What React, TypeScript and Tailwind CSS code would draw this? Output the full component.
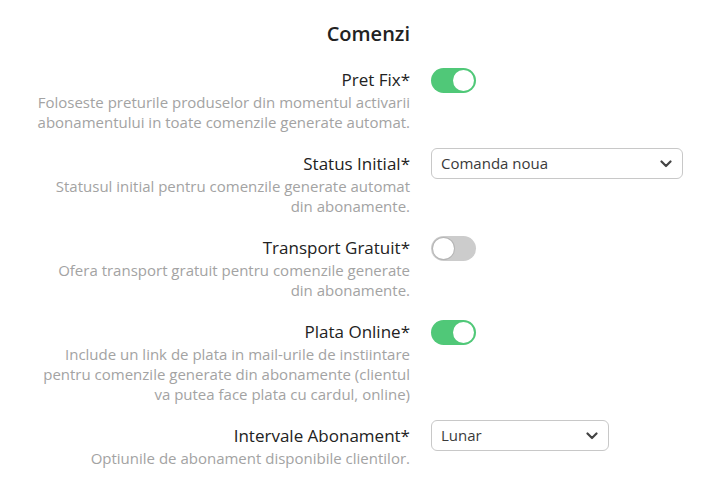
import type { ReactNode } from 'react';

type Row = {
  label: string;
  description: string[];
  control: ReactNode;
};

function Toggle({ on }: { on: boolean }) {
  return (
    <div
      className={
        on
          ? 'relative w-[45px] h-[25px] rounded-full bg-[#50c878] shrink-0'
          : 'relative w-[45px] h-[25px] rounded-full bg-[#cccccc] shrink-0'
      }
    >
      <div
        className={
          on
            ? 'absolute top-[2px] right-[2px] w-[21px] h-[21px] rounded-full bg-white'
            : 'absolute top-[2px] left-[2px] w-[21px] h-[21px] rounded-full bg-white shadow-[0_0_0_1px_#b5b5b5]'
        }
      />
    </div>
  );
}

function SelectBox({ value, width }: { value: string; width: string }) {
  return (
    <div
      className={`-mt-[4px] h-[31px] ${width} flex items-center justify-between rounded-[6px] border border-[#c8c8c8] bg-white pl-[9px] pr-[10px] shrink-0`}
    >
      <span className="text-[15px] text-[#3a3a3a]">{value}</span>
      <svg width="12" height="8" viewBox="0 0 12 8" className="text-[#444]">
        <path d="M1.5 1.5 6 6l4.5-4.5" fill="none" stroke="currentColor" strokeWidth="2.2" strokeLinecap="round" strokeLinejoin="round" />
      </svg>
    </div>
  );
}

const rows: Row[] = [
  {
    label: 'Pret Fix*',
    description: [
      'Foloseste preturile produselor din momentul activarii',
      'abonamentului in toate comenzile generate automat.',
    ],
    control: <Toggle on />,
  },
  {
    label: 'Status Initial*',
    description: ['Statusul initial pentru comenzile generate automat', 'din abonamente.'],
    control: <SelectBox value="Comanda noua" width="w-[252px]" />,
  },
  {
    label: 'Transport Gratuit*',
    description: ['Ofera transport gratuit pentru comenzile generate', 'din abonamente.'],
    control: <Toggle on={false} />,
  },
  {
    label: 'Plata Online*',
    description: [
      'Include un link de plata in mail-urile de instiintare',
      'pentru comenzile generate din abonamente (clientul',
      'va putea face plata cu cardul, online)',
    ],
    control: <Toggle on />,
  },
  {
    label: 'Intervale Abonament*',
    description: ['Optiunile de abonament disponibile clientilor.'],
    control: <SelectBox value="Lunar" width="w-[178px]" />,
  },
];

function App() {
  return (
    <div className="min-h-screen bg-white font-['Open_Sans',sans-serif] pt-[20px]">
      <div className="flex">
        <div className="w-[410px] text-right">
          <h2 className="text-[20px] leading-[28px] font-semibold text-[#222]">Comenzi</h2>
        </div>
      </div>

      <div className="flex flex-col gap-5 mt-5">
        {rows.map((row) => (
          <div key={row.label} className="flex items-start gap-[21px]">
            <div className="w-[410px] pl-[30px] text-right">
              <div className="text-[17px] leading-[24px] text-[#222]">{row.label}</div>
              <div className="text-[15px] leading-[20px] text-[#a3a3a3]">
                {row.description.map((line) => (
                  <div key={line}>{line}</div>
                ))}
              </div>
            </div>
            {row.control}
          </div>
        ))}
      </div>
    </div>
  );
}

export default App;
